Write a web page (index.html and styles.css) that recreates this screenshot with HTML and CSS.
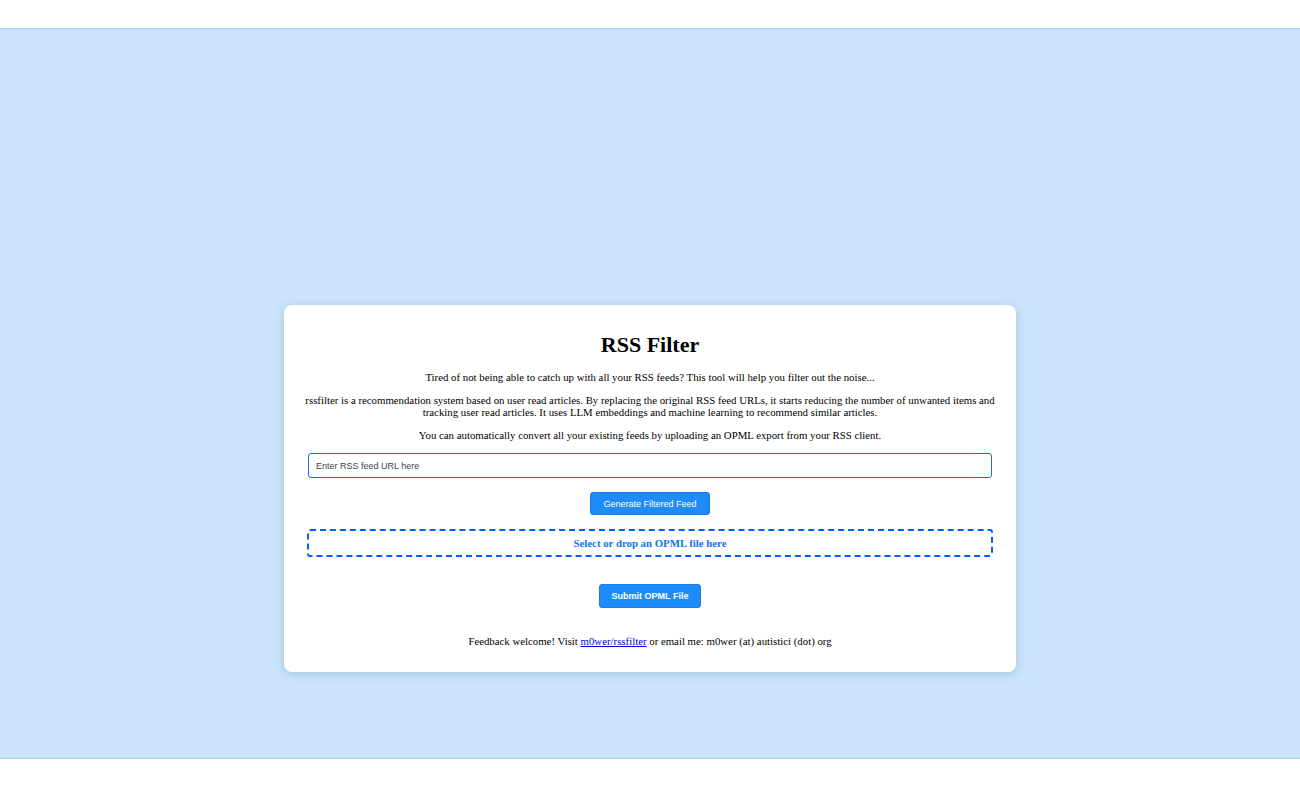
FILE: index.html
```html
<!DOCTYPE html>
<html lang="en">
<head>
<meta charset="utf-8">
<title>RSS Filter</title>
<link rel="stylesheet" href="styles.css">
</head>
<body>
<header class="topbar"></header>
<main class="stage">
  <section class="card">
    <h1 class="title">RSS Filter</h1>
    <p class="lead">Tired of not being able to catch up with all your RSS feeds? This tool will help you filter out the noise...</p>
    <p class="lead">rssfilter is a recommendation system based on user read articles. By replacing the original RSS feed URLs, it starts reducing the number of unwanted items and tracking user read articles. It uses LLM embeddings and machine learning to recommend similar articles.</p>
    <p class="lead lead-last">You can automatically convert all your existing feeds by uploading an OPML export from your RSS client.</p>
    <input class="url-input" type="text" placeholder="Enter RSS feed URL here">
    <div class="btn-row"><button class="btn">Generate Filtered Feed</button></div>
    <label class="dropzone">Select or drop an OPML file here</label>
    <div class="btn-row btn-row-submit"><button class="btn btn-bold">Submit OPML File</button></div>
    <p class="feedback">Feedback welcome! Visit <a href="#">m0wer/rssfilter</a> or email me: m0wer (at) autistici (dot) org</p>
  </section>
</main>
<footer class="bottombar"></footer>
</body>
</html>
```

FILE: styles.css
```css
html, body {
  margin: 0;
  padding: 0;
  background: #ffffff;
  font-family: "Liberation Serif", "Times New Roman", serif;
  color: #000;
}

.topbar {
  height: 28px;
}

.stage {
  box-sizing: border-box;
  height: 731px;
  background: #c9e4fb;
  border-top: 1px solid #a9d2f7;
  border-bottom: 1px solid #a9d2f7;
  display: flex;
  justify-content: center;
  align-items: flex-start;
  padding-top: 276px;
}

.card {
  box-sizing: border-box;
  width: 732px;
  height: 367px;
  background: #ffffff;
  border-radius: 8px;
  box-shadow: 0 2px 8px rgba(60, 100, 150, 0.25);
  padding: 20px 20px 0;
  text-align: center;
}

.title {
  font-size: 22px;
  font-weight: bold;
  line-height: 26px;
  margin: 7px 0 13px;
}

.lead {
  font-size: 10.8px;
  line-height: 12px;
  margin: 0 0 11px;
}

.lead-last {
  margin-bottom: 12px;
}

.url-input {
  display: block;
  box-sizing: border-box;
  width: 684px;
  height: 25px;
  margin: 0 auto;
  padding: 0 7px;
  border: 1px solid #1a6fe0;
  border-radius: 3px;
  font-family: "Liberation Sans", Arial, sans-serif;
  font-size: 9px;
  color: #333;
  outline: none;
}

.url-input::placeholder {
  color: #444;
}

.btn-row {
  display: flex;
  justify-content: center;
  margin: 14px 0 14px;
}

.btn-row-submit {
  margin: 27px 0 0;
}

.btn {
  box-sizing: border-box;
  height: 23px;
  padding: 0 12px;
  background: #1e8cf8;
  color: #fff;
  border: 1px solid #1a78e0;
  border-radius: 3px;
  font-family: "Liberation Sans", Arial, sans-serif;
  font-size: 9px;
}

.btn-bold {
  height: 24px;
  font-weight: bold;
}

.dropzone {
  display: flex;
  align-items: center;
  justify-content: center;
  box-sizing: border-box;
  width: 686px;
  height: 28px;
  margin: 0 auto;
  border: 2px dashed #0a5cff;
  border-radius: 3px;
  color: #1272ee;
  font-weight: bold;
  font-size: 10.8px;
}

.feedback {
  font-size: 10.8px;
  line-height: 12px;
  margin: 27px 0 0;
}

.feedback a {
  color: #0000ee;
}

.bottombar {
  height: 29px;
}
```
